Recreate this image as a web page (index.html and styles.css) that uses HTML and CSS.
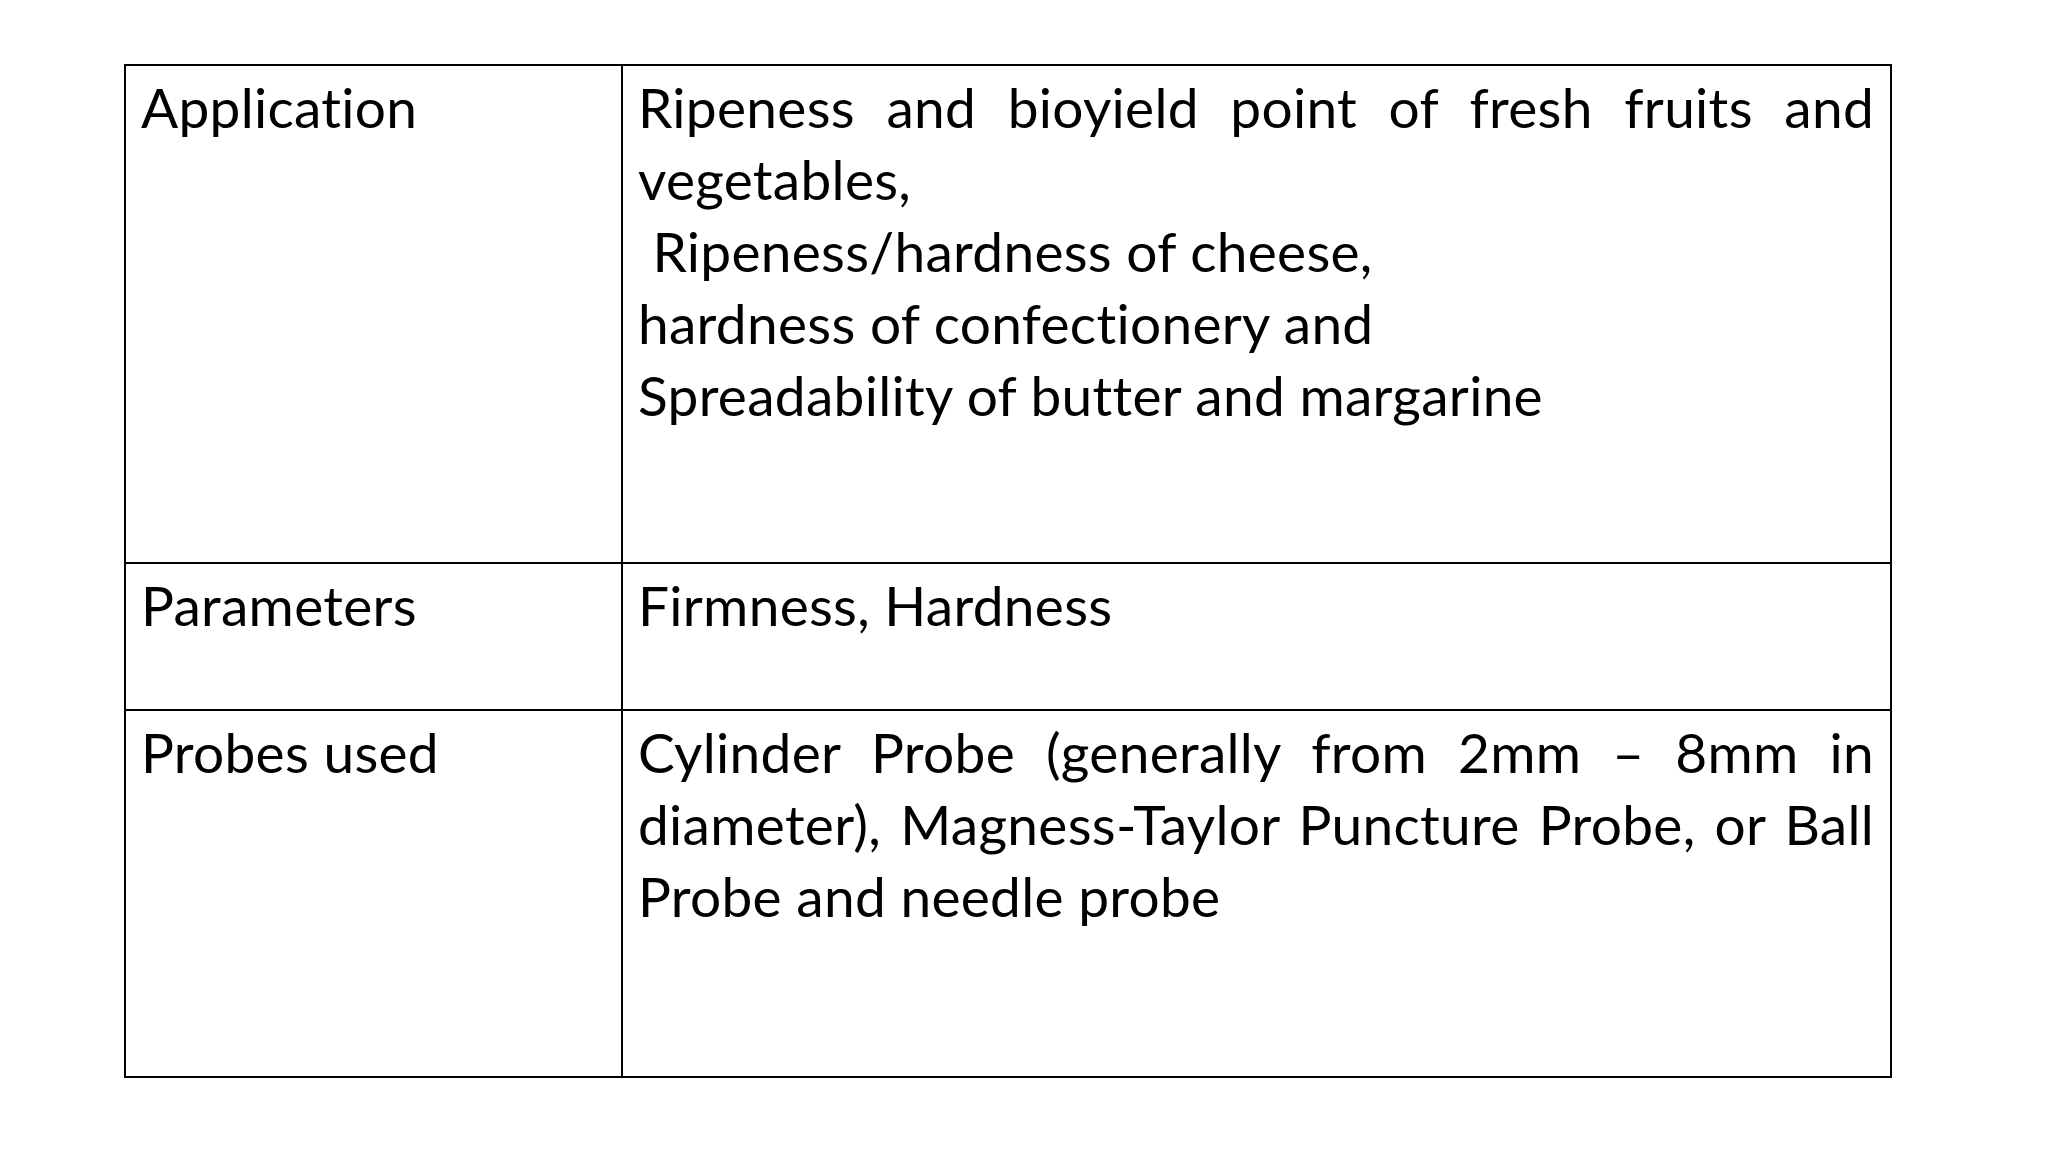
FILE: index.html
```html
<!DOCTYPE html>
<html lang="en">
<head>
<meta charset="utf-8">
<title>Application table</title>
<link rel="stylesheet" href="styles.css">
</head>
<body>
<div class="page">
  <div class="table">
    <div class="cell label">Application</div>
    <div class="cell value">
      <div class="line just">Ripeness and bioyield point of fresh fruits and</div>
      <div class="line">vegetables,</div>
      <div class="line">&nbsp;Ripeness/hardness of cheese,</div>
      <div class="line">hardness of confectionery and</div>
      <div class="line">Spreadability of butter and margarine</div>
    </div>
    <div class="cell label">Parameters</div>
    <div class="cell value">
      <div class="line">Firmness, Hardness</div>
    </div>
    <div class="cell label">Probes used</div>
    <div class="cell value">
      <div class="line just">Cylinder Probe (generally from 2mm – 8mm in</div>
      <div class="line just">diameter), Magness-Taylor Puncture Probe, or Ball</div>
      <div class="line">Probe and needle probe</div>
    </div>
  </div>
</div>
</body>
</html>
```
FILE: styles.css
```css
html, body {
  margin: 0;
  padding: 0;
  background: #ffffff;
}

.page {
  width: 2048px;
  height: 1152px;
  padding: 64px 0 0 124px;
  box-sizing: border-box;
}

.table {
  display: grid;
  grid-template-columns: 497px 1269px;
  grid-template-rows: 498px 147px 367px;
  border-top: 2px solid #000;
  border-left: 2px solid #000;
  width: max-content;
  font-family: "Lato", "Open Sans", sans-serif;
  font-size: 55px;
  line-height: 72px;
  letter-spacing: 0.3px;
  font-variant-ligatures: none;
  color: #000;
}

.cell {
  border-right: 2px solid #000;
  border-bottom: 2px solid #000;
  padding: 5px 16px 0 15px;
  box-sizing: border-box;
  overflow: hidden;
}

.line {
  white-space: nowrap;
}

.line.just {
  white-space: normal;
  text-align: justify;
  text-align-last: justify;
}
```
